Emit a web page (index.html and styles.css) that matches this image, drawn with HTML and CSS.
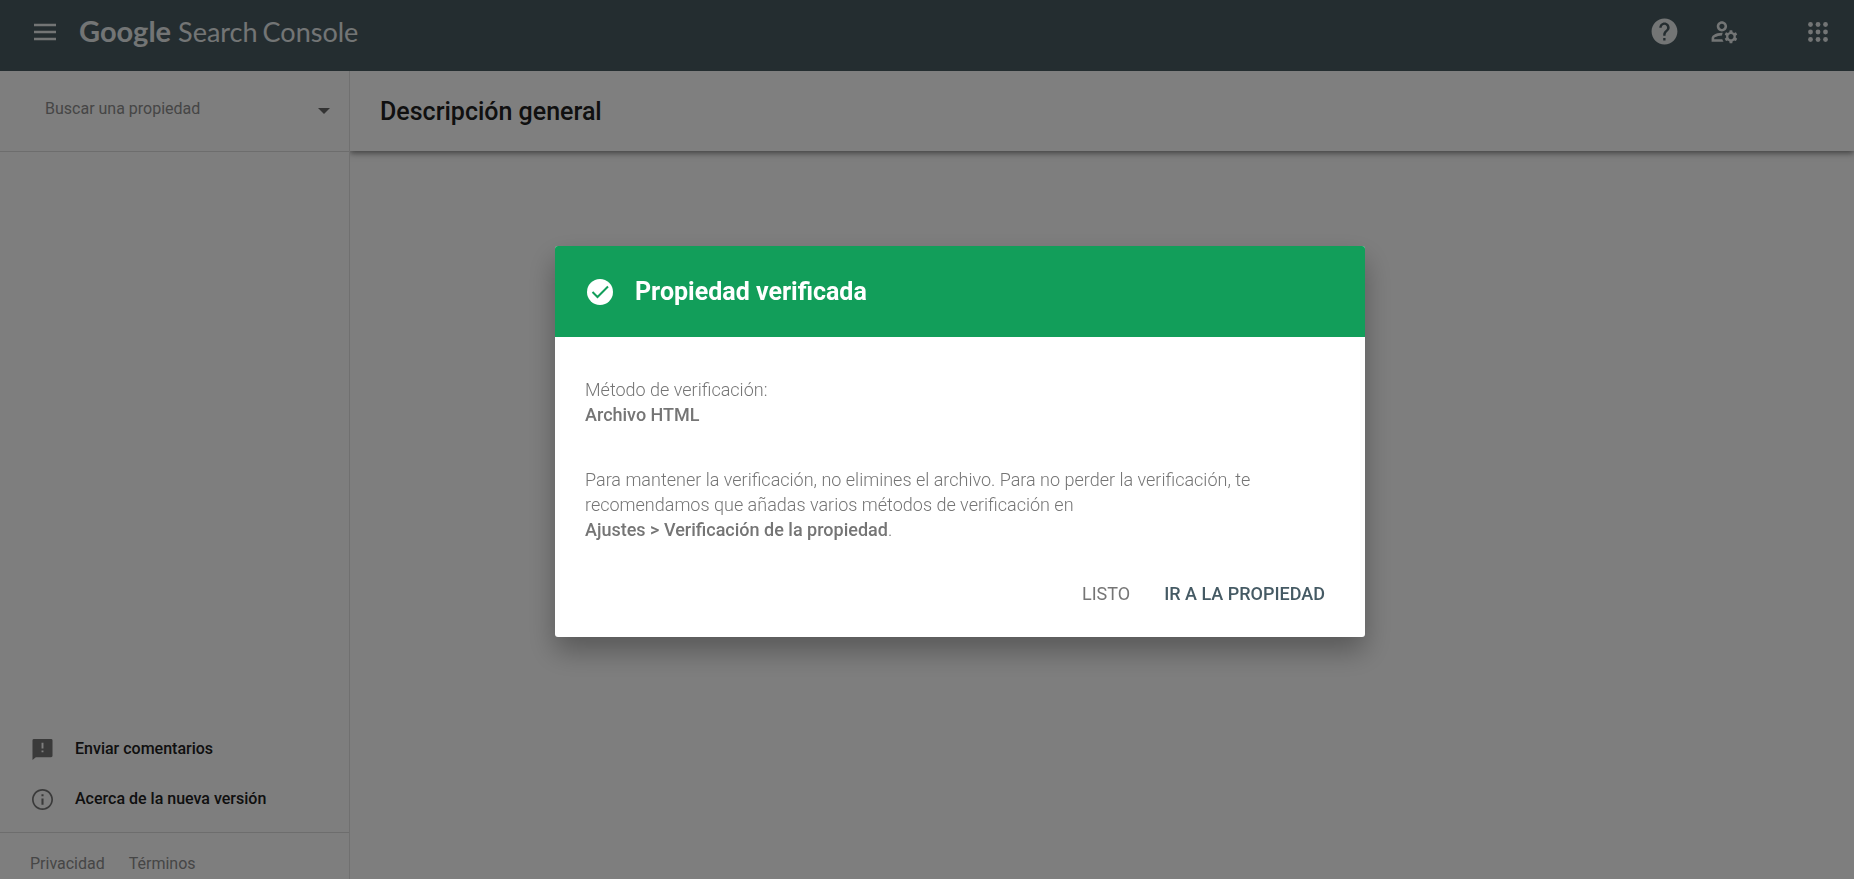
FILE: index.html
```html
<!DOCTYPE html>
<html lang="es">
<head>
<meta charset="utf-8">
<meta name="viewport" content="width=device-width, initial-scale=1">
<title>Google Search Console</title>
<link rel="stylesheet" href="styles.css">
</head>
<body>
<div class="app">
  <header class="topbar">
    <button class="icon-button" type="button" aria-label="Menú principal">
      <svg class="icon-menu" viewBox="0 0 24 18" aria-hidden="true"><path d="M1 2h22M1 9h22M1 16h22"/></svg>
    </button>
    <a class="logo" href="#"><span class="logo-brand">Google</span> <span class="logo-product"><span>Search</span> <span>Console</span></span></a>
    <div class="topbar-actions">
      <button class="icon-button" type="button" aria-label="Ayuda">
        <svg class="icon-large" viewBox="0 0 24 24" aria-hidden="true"><path d="M12 2C6.480 2 2 6.480 2 12s4.480 10 10 10 10-4.480 10-10S17.520 2 12 2zm.8 17h-1.800v-1.900h1.800V19zm2.270-7.750l-.9.920C13.250 13.100 12.800 13.700 12.800 15.200H11v-.7c0-1.100.45-2.100 1.170-2.830l1.240-1.260c.37-.36.590-.86.590-1.410 0-1.100-.9-2.200-2-2.200s-2.200 1-2.200 2.200H8c0-2.210 1.790-4 4-4s4 1.790 4 4c0 .88-.36 1.680-.93 2.250z"/></svg>
      </button>
      <button class="icon-button" type="button" aria-label="Configuración de usuario">
        <svg class="icon-large" viewBox="0 0 24 24" aria-hidden="true"><path d="M4 18v-.65c0-.34.16-.66.41-.81C6.100 15.530 8.030 15 10 15c.03 0 .05 0 .08.010.1-.7.3-1.370.590-1.980-.22-.02-.44-.03-.67-.03-2.420 0-4.680.67-6.610 1.820-.88.520-1.390 1.500-1.390 2.530V20h9.260c-.42-.6-.75-1.280-.97-2H4zM10 12c2.210 0 4-1.790 4-4s-1.790-4-4-4-4 1.790-4 4 1.790 4 4 4zm0-6c1.100 0 2 .9 2 2s-.9 2-2 2-2-.9-2-2 .9-2 2-2zM20.750 16c0-.22-.03-.42-.06-.63l1.140-1.010-1-1.730-1.450.49c-.32-.27-.68-.48-1.080-.63L18 11h-2l-.3 1.490c-.4.150-.76.360-1.080.63l-1.450-.49-1 1.730 1.140 1.010c-.03.210-.06.410-.06.630s.03.420.06.630l-1.140 1.010 1 1.730 1.450-.49c.32.270.68.480 1.080.63L16 21h2l.3-1.490c.4-.15.76-.36 1.080-.63l1.450.49 1-1.730-1.140-1.010c.03-.21.06-.41.06-.63zM17 18c-1.100 0-2-.9-2-2s.9-2 2-2 2 .9 2 2-.9 2-2 2z"/></svg>
      </button>
      <button class="icon-button icon-button-apps" type="button" aria-label="Aplicaciones de Google">
        <svg class="icon-apps" viewBox="0 0 20 20" aria-hidden="true"><circle cx="2.500" cy="2.500" r="2.400"/><circle cx="10" cy="2.500" r="2.400"/><circle cx="17.500" cy="2.500" r="2.400"/><circle cx="2.500" cy="10" r="2.400"/><circle cx="10" cy="10" r="2.400"/><circle cx="17.500" cy="10" r="2.400"/><circle cx="2.500" cy="17.500" r="2.400"/><circle cx="10" cy="17.500" r="2.400"/><circle cx="17.500" cy="17.500" r="2.400"/></svg>
      </button>
    </div>
  </header>

  <div class="workspace">
    <aside class="sidebar">
      <div class="property-picker">
        <input class="property-input" type="text" placeholder="Buscar una propiedad" aria-label="Buscar una propiedad">
        <button class="property-toggle" type="button" aria-label="Mostrar propiedades">
          <svg class="icon-caret" viewBox="0 0 12 6" aria-hidden="true"><path d="M0 0h12L6 6z"/></svg>
        </button>
      </div>
      <nav class="side-links">
        <a class="side-link" href="#">
          <svg class="icon-side" viewBox="0 0 22 22" aria-hidden="true"><path fill-rule="evenodd" d="M2 0h18a1.500 1.500 0 0 1 1.500 1.500v16A1.500 1.500 0 0 1 20 19H4L.5 22V1.500A1.500 1.500 0 0 1 2 0zM10 4v6h2V4zM10 12v2h2v-2z"/></svg>
          Enviar comentarios
        </a>
        <a class="side-link" href="#">
          <svg class="icon-side" viewBox="2 2 20 20" aria-hidden="true"><path d="M11 17h2v-6h-2v6zm1-15C6.480 2 2 6.480 2 12s4.480 10 10 10 10-4.480 10-10S17.520 2 12 2zm0 18.400c-4.630 0-8.400-3.770-8.400-8.400S7.370 3.600 12 3.600s8.400 3.770 8.400 8.400-3.770 8.400-8.400 8.400zM11 9h2V7h-2v2z"/></svg>
          Acerca de la nueva versión
        </a>
      </nav>
      <footer class="side-footer">
        <a href="#">Privacidad</a>
        <a href="#">Términos</a>
      </footer>
    </aside>
    <main class="content">
      <div class="content-header"><h1 class="page-title">Descripción general</h1></div>
    </main>
  </div>
</div>

<div class="scrim">
  <section class="dialog" role="dialog" aria-modal="true" aria-labelledby="dialog-title">
    <header class="dialog-header">
      <svg class="icon-check" viewBox="0 0 26 26" aria-hidden="true"><circle cx="13" cy="13" r="13"/><path d="M5.500 13l5 5L21 7.500"/></svg>
      <h2 class="dialog-title" id="dialog-title">Propiedad verificada</h2>
    </header>
    <div class="dialog-body">
      <p class="dialog-text">Método de verificación:<br><strong>Archivo HTML</strong></p>
      <p class="dialog-text">Para mantener la verificación, no elimines el archivo. Para no perder la verificación, te recomendamos que añadas varios métodos de verificación en <strong class="path">Ajustes &gt; Verificación de la propiedad</strong>.</p>
    </div>
    <div class="dialog-actions">
      <button class="text-button" type="button">LISTO</button>
      <button class="text-button text-button-primary" type="button">IR A LA PROPIEDAD</button>
    </div>
  </section>
</div>
</body>
</html>
```
FILE: styles.css
```css
* {
  box-sizing: border-box;
}

body {
  margin: 0;
  font-family: Roboto, sans-serif;
  font-size: 16px;
  color: #212121;
  background: #fcfcfc;
}

a {
  color: inherit;
  text-decoration: none;
}

button {
  padding: 0;
  border: 0;
  background: none;
  color: inherit;
  font: inherit;
  cursor: pointer;
}

svg {
  display: block;
  fill: currentColor;
}

.app {
  display: flex;
  flex-direction: column;
  height: 100vh;
  overflow: hidden;
}

.topbar {
  display: flex;
  align-items: center;
  flex: none;
  height: 71px;
  padding: 0 26px 8px 33px;
  color: #e6eaeb;
  background: #485a60;
}

.icon-menu {
  width: 24px;
  height: 18px;
  fill: none;
  stroke: currentColor;
  stroke-width: 2.4;
}

.logo {
  display: flex;
  align-items: baseline;
  gap: 7px;
  margin-left: 22px;
  font-family: Lato, sans-serif;
  font-size: 27px;
  line-height: 40px;
}

.logo-brand {
  font-size: 29px;
  font-weight: 700;
}

.logo-product {
  display: flex;
  gap: 5px;
}

.topbar-actions {
  display: flex;
  align-items: center;
  gap: 29px;
  margin-left: auto;
}

.icon-large {
  width: 31px;
  height: 31px;
}

.icon-button-apps {
  margin-left: 39px;
}

.icon-apps {
  width: 20px;
  height: 20px;
}

.workspace {
  display: flex;
  flex: 1;
  min-height: 0;
}

.sidebar {
  display: flex;
  flex-direction: column;
  flex: none;
  width: 350px;
  border-right: 1px solid #e0e0e0;
}

.property-picker {
  display: flex;
  align-items: center;
  height: 81px;
  padding: 0 19px 0 45px;
  border-bottom: 1px solid #dadada;
}

.property-input {
  flex: 1;
  min-width: 0;
  padding: 0 0 4px;
  border: 0;
  outline: 0;
  background: none;
  font: 400 16px/24px Roboto, sans-serif;
}

.property-input::placeholder {
  color: #8c8c8c;
  opacity: 1;
}

.property-toggle {
  color: #666;
}

.icon-caret {
  width: 12px;
  height: 6px;
}

.side-links {
  display: flex;
  flex-direction: column;
  gap: 26px;
  margin-top: auto;
  padding: 0 32px 21px;
}

.side-link {
  display: flex;
  align-items: center;
  gap: 22px;
  font-weight: 500;
  line-height: 24px;
}

.icon-side {
  width: 21px;
  height: 21px;
  color: #757575;
}

.side-footer {
  display: flex;
  gap: 24px;
  padding: 19px 30px 3px;
  border-top: 1px solid #dadada;
  color: #8c8c8c;
  line-height: 24px;
}

.content {
  flex: 1;
  min-width: 0;
}

.content-header {
  display: flex;
  align-items: center;
  height: 80px;
  padding: 2px 30px 0;
  background: #fff;
  box-shadow: 0 2px 6px rgba(0, 0, 0, 0.5);
  clip-path: inset(0 0 -12px 0);
}

.page-title {
  margin: 0;
  font-size: 25px;
  font-weight: 500;
  line-height: 32px;
}

.scrim {
  position: fixed;
  inset: 0;
  display: flex;
  align-items: center;
  justify-content: center;
  padding: 24px 18px 20px 84px;
  background: rgba(0, 0, 0, 0.5);
}

.dialog {
  width: 100%;
  max-width: 810px;
  overflow: hidden;
  border-radius: 3px;
  background: #fff;
  box-shadow: 0 14px 28px rgba(0, 0, 0, 0.3);
}

.dialog-header {
  display: flex;
  align-items: center;
  gap: 22px;
  padding: 30px 32px 29px;
  color: #fff;
  background: #129e5a;
}

.icon-check {
  width: 26px;
  height: 26px;
}

.icon-check path {
  fill: none;
  stroke: #129e5a;
  stroke-width: 2;
}

.dialog-title {
  margin: 0;
  font-size: 25px;
  font-weight: 700;
  line-height: 32px;
}

.dialog-body {
  display: flex;
  flex-direction: column;
  gap: 40px;
  padding: 40px 30px 32px;
  color: #757575;
}

.dialog-text {
  max-width: 700px;
  margin: 0;
  font-size: 18px;
  font-weight: 300;
  line-height: 25px;
}

.dialog-text strong {
  font-weight: 500;
}

.path {
  white-space: nowrap;
}

.dialog-actions {
  display: flex;
  justify-content: flex-end;
  gap: 34px;
  padding: 0 40px 23px;
}

.text-button {
  color: #757575;
  font-size: 18px;
  line-height: 40px;
}

.text-button-primary {
  color: #455a64;
  font-weight: 500;
}
```
